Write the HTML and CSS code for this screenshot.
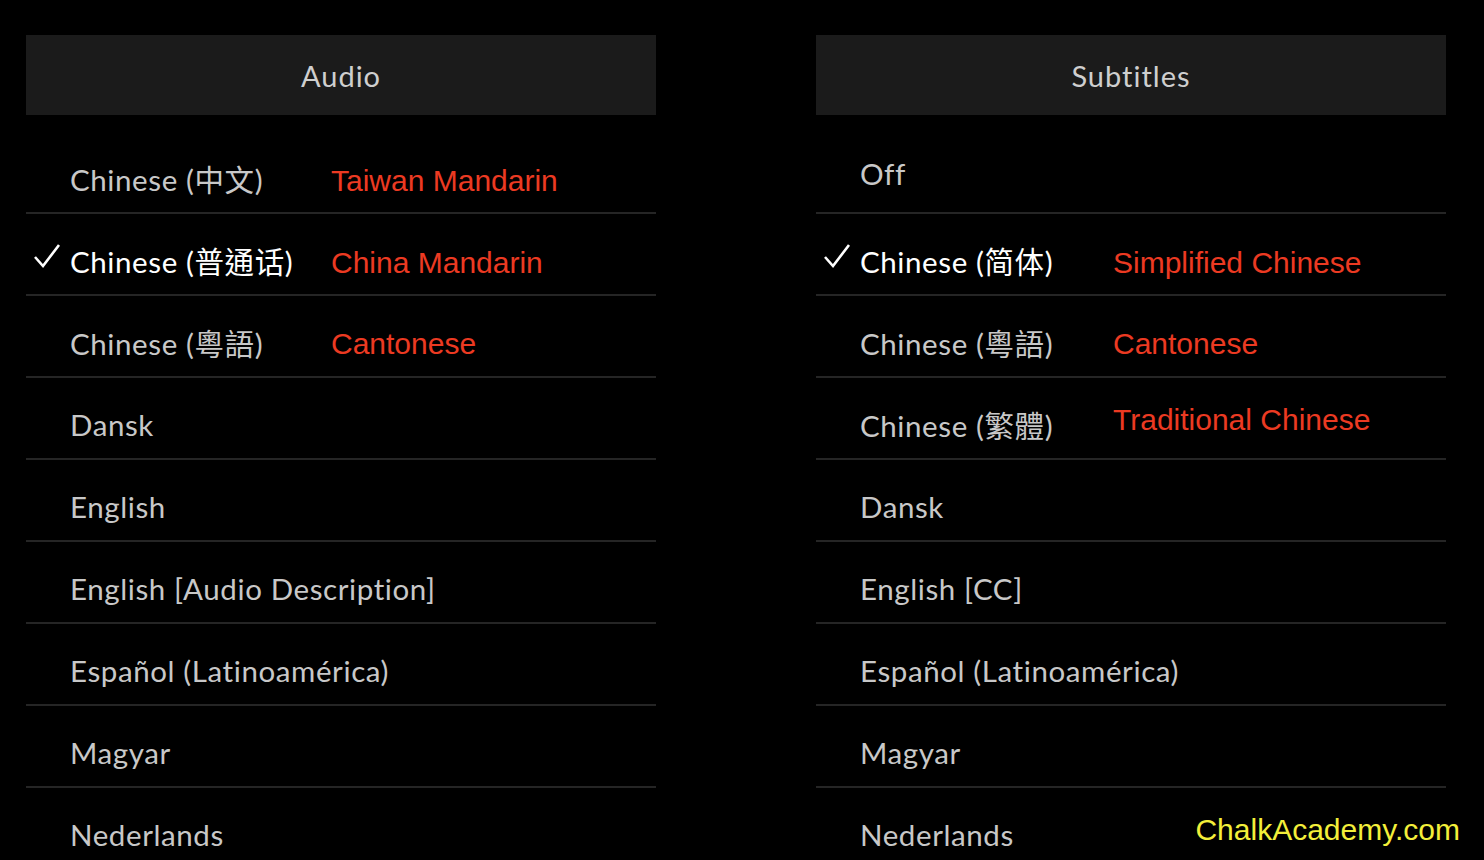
FILE: index.html
```html
<!DOCTYPE html>
<html lang="en">
<head>
    <meta charset="UTF-8">
    <meta name="viewport" content="width=device-width, initial-scale=1.0">
    <title>Audio and Subtitles</title>
    <link rel="stylesheet" href="styles.css">
</head>
<body>
    <div class="container">
        <div class="panel">
            <div class="panel-header">Audio</div>
            <ul class="options">
                <li class="option"><span class="check"></span><span class="label">Chinese (中文)</span><span class="note note-low">Taiwan Mandarin</span></li>
                <li class="option selected"><span class="check"><svg width="28" height="26" viewBox="0 0 28 26"><path d="M2 14 L10 23 L26 2" fill="none" stroke="#fff" stroke-width="2.6"/></svg></span><span class="label">Chinese (普通话)</span><span class="note note-low">China Mandarin</span></li>
                <li class="option"><span class="check"></span><span class="label">Chinese (粵語)</span><span class="note">Cantonese</span></li>
                <li class="option"><span class="check"></span><span class="label">Dansk</span></li>
                <li class="option"><span class="check"></span><span class="label">English</span></li>
                <li class="option"><span class="check"></span><span class="label">English [Audio Description]</span></li>
                <li class="option"><span class="check"></span><span class="label">Español (Latinoamérica)</span></li>
                <li class="option"><span class="check"></span><span class="label">Magyar</span></li>
                <li class="option"><span class="check"></span><span class="label">Nederlands</span></li>
            </ul>
        </div>

        <div class="panel panel-right">
            <div class="panel-header">Subtitles</div>
            <ul class="options">
                <li class="option option-off"><span class="check"></span><span class="label">Off</span></li>
                <li class="option selected"><span class="check"><svg width="28" height="26" viewBox="0 0 28 26"><path d="M2 14 L10 23 L26 2" fill="none" stroke="#fff" stroke-width="2.6"/></svg></span><span class="label">Chinese (简体)</span><span class="note note-low">Simplified Chinese</span></li>
                <li class="option"><span class="check"></span><span class="label">Chinese (粵語)</span><span class="note">Cantonese</span></li>
                <li class="option"><span class="check"></span><span class="label">Chinese (繁體)</span><span class="note note-high">Traditional Chinese</span></li>
                <li class="option"><span class="check"></span><span class="label">Dansk</span></li>
                <li class="option"><span class="check"></span><span class="label">English [CC]</span></li>
                <li class="option"><span class="check"></span><span class="label">Español (Latinoamérica)</span></li>
                <li class="option"><span class="check"></span><span class="label">Magyar</span></li>
                <li class="option"><span class="check"></span><span class="label">Nederlands</span></li>
            </ul>
        </div>
    </div>

    <div class="watermark">ChalkAcademy.com</div>
</body>
</html>
```

FILE: styles.css
```css
body {
    margin: 0;
    height: 860px;
    overflow: hidden;
    background-color: #000;
    font-family: Lato, "Noto Sans CJK TC", sans-serif;
    color: #c8c8c8;
}
.container {
    display: flex;
    gap: 160px;
    padding: 35px 26px 0;
}
.panel {
    width: 630px;
}
.panel-header {
    height: 80px;
    background-color: #1b1b1b;
    display: flex;
    align-items: center;
    justify-content: center;
    font-size: 29px;
    letter-spacing: 1px;
    color: #cfcfcf;
}
.options {
    list-style: none;
    margin: 17px 0 0;
    padding: 0;
}
.option {
    box-sizing: border-box;
    height: 82px;
    padding: 12px 0 0 7px;
    border-bottom: 2px solid #252525;
    display: flex;
    align-items: center;
    font-size: 29.5px;
    letter-spacing: 0.6px;
}
.option-off {
    padding-top: 3px;
}
.check {
    width: 37px;
    flex-shrink: 0;
    display: flex;
    align-items: center;
    margin-top: -8px;
}
.label {
    width: 261px;
    flex-shrink: 0;
    white-space: nowrap;
}
.panel-right .label {
    width: 253px;
}
.selected .label {
    color: #fff;
}
.note {
    position: relative;
    top: 2px;
    font-family: "Liberation Sans", Arial, sans-serif;
    font-size: 30px;
    letter-spacing: 0;
    color: #ec3a22;
    white-space: nowrap;
}
.note-low {
    top: 3px;
}
.note-high {
    top: -4px;
}
.watermark {
    position: absolute;
    right: 24px;
    bottom: 13px;
    font-family: "Liberation Sans", Arial, sans-serif;
    font-size: 30px;
    color: #f3ef3a;
}
```
